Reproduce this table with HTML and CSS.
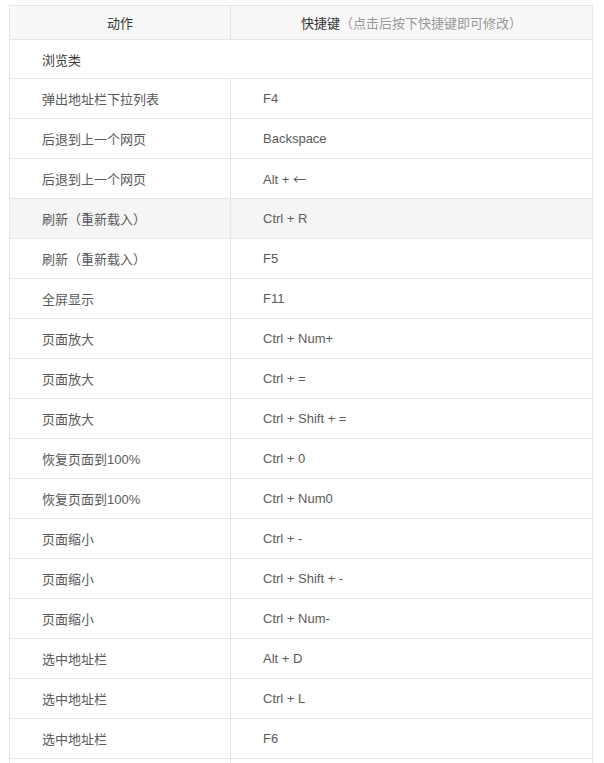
FILE: index.html
```html
<!DOCTYPE html>
<html>
<head>
<meta charset="utf-8">
<link rel="stylesheet" href="styles.css">
</head>
<body>
<table class="keys">
  <thead>
    <tr>
      <th class="c1">动作</th>
      <th class="c2">快捷键<span class="hint">（点击后按下快捷键即可修改）</span></th>
    </tr>
  </thead>
  <tbody>
    <tr class="section"><td colspan="2">浏览类</td></tr>
    <tr><td>弹出地址栏下拉列表</td><td>F4</td></tr>
    <tr><td>后退到上一个网页</td><td>Backspace</td></tr>
    <tr><td>后退到上一个网页</td><td>Alt + <span class="arrow">←</span></td></tr>
    <tr class="hover"><td>刷新（重新载入）</td><td>Ctrl + R</td></tr>
    <tr><td>刷新（重新载入）</td><td>F5</td></tr>
    <tr><td>全屏显示</td><td>F11</td></tr>
    <tr><td>页面放大</td><td>Ctrl + Num+</td></tr>
    <tr><td>页面放大</td><td>Ctrl + =</td></tr>
    <tr><td>页面放大</td><td>Ctrl + Shift + =</td></tr>
    <tr><td>恢复页面到100%</td><td>Ctrl + 0</td></tr>
    <tr><td>恢复页面到100%</td><td>Ctrl + Num0</td></tr>
    <tr><td>页面缩小</td><td>Ctrl + -</td></tr>
    <tr><td>页面缩小</td><td>Ctrl + Shift + -</td></tr>
    <tr><td>页面缩小</td><td>Ctrl + Num-</td></tr>
    <tr><td>选中地址栏</td><td>Alt + D</td></tr>
    <tr><td>选中地址栏</td><td>Ctrl + L</td></tr>
    <tr><td>选中地址栏</td><td>F6</td></tr>
    <tr><td>&nbsp;</td><td>&nbsp;</td></tr>
  </tbody>
</table>
</body>
</html>
```

FILE: styles.css
```css
html, body {
  margin: 0;
  padding: 0;
  background: #fff;
}
body {
  padding: 5px 11px 0 9px;
  font-family: "Liberation Sans", "Noto Sans CJK SC", sans-serif;
  font-size: 13px;
  color: #5a5a5a;
  overflow: hidden;
}
.keys {
  width: 584px;
  border-collapse: collapse;
  table-layout: fixed;
}
.keys th, .keys td {
  border: 1px solid #e6e6e6;
  padding: 0 0 0 32px;
  text-align: left;
  font-weight: normal;
}
.keys th {
  height: 33px;
  background: #f8f8f8;
  color: #333;
  text-align: center;
  padding: 0;
}
.keys .c1 { width: 220px; }
.keys .hint { color: #999; }
.keys td { height: 39px; }
.keys .section td { height: 38px; color: #3a3a3a; }
.keys .hover td { background: #f5f5f5; }
.arrow { font-family: "Noto Sans CJK SC", sans-serif; }
```
